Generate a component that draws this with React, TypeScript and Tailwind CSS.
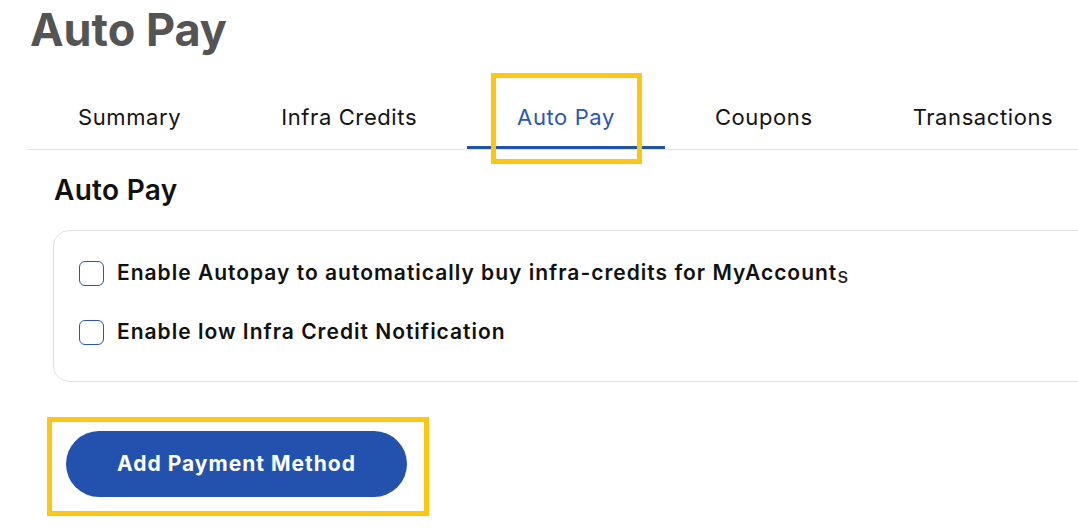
import React from "react";

const tabs = ["Summary", "Infra Credits", "Auto Pay", "Coupons", "Transactions"];
const active = "Auto Pay";

function Check({ label, tail }: { label: string; tail?: string }) {
  return (
    <label className="flex items-center gap-[13px]">
      <span className="h-[25px] w-[25px] shrink-0 rounded-[6px] border border-[#2b55b0] bg-white" />
      <span className="whitespace-nowrap text-[21px] leading-[28px] font-semibold tracking-[1px] text-[#111]">
        {label}
        {tail && (
          <span className="relative top-[3px] font-normal tracking-normal text-[#222]">{tail}</span>
        )}
      </span>
    </label>
  );
}

export default function App() {
  return (
    <div
      className="relative h-[528px] w-[1078px] overflow-hidden bg-white"
      style={{ fontFamily: "Inter, 'Noto Sans', sans-serif" }}
    >
      <h1 className="pl-[30px] pt-[4px] text-[45px] leading-[52px] font-bold text-[#545454]">
        Auto Pay
      </h1>

      {/* tab bar */}
      <div className="ml-[28px] mt-[29px] flex w-[1100px] border-b border-[#e2e2e2]">
        {tabs.map((t) => (
          <div
            key={t}
            className={
              "shrink-0 whitespace-nowrap px-[50px] pt-[18px] pb-[15px] text-[22px] leading-[28px] tracking-[0.6px] border-b-[3px] " +
              (t === active
                ? "border-[#2352ae] text-[#2b57b3]"
                : "border-transparent text-[#141414]")
            }
          >
            {t}
          </div>
        ))}
      </div>

      <h2 className="ml-[54px] mt-[22px] text-[28px] leading-[36px] font-semibold tracking-[0.3px] text-[#111]">
        Auto Pay
      </h2>

      <div className="ml-[53px] mt-[22px] w-[1100px] rounded-[16px] border border-[#e0e0e0] px-[25px] pt-[28px] pb-[35px]">
        <div className="flex flex-col gap-[31px]">
          <Check label="Enable Autopay to automatically buy infra-credits for MyAccount" tail="s" />
          <Check label="Enable low Infra Credit Notification" />
        </div>
      </div>

      <button className="ml-[66px] mt-[49px] flex h-[66px] w-[341px] items-center justify-center rounded-full bg-[#2352ae] text-[21px] font-bold tracking-[1px] text-white">
        Add Payment Method
      </button>

      {/* highlight annotations */}
      <div className="pointer-events-none absolute left-[491px] top-[73px] h-[91px] w-[151px] border-[5px] border-[#fcc613]" />
      <div className="pointer-events-none absolute left-[47px] top-[417px] h-[99px] w-[382px] border-[5px] border-[#fcc613]" />
    </div>
  );
}
